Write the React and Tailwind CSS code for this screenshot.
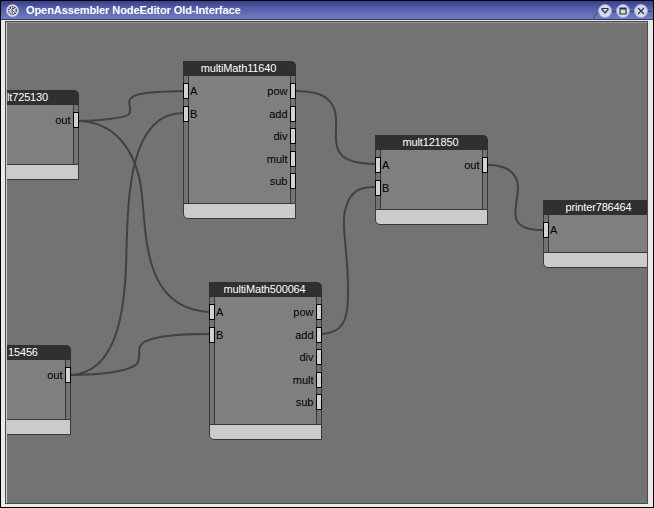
import React from "react";

const FONT = "font-['Liberation_Sans',Arial,sans-serif]";

const nodes = [
  { x: -41, y: 67, w: 113, body: 59, title: "lt725130", titleX: 41, inputs: [], outputs: ["out"] },
  { x: -49, y: 322, w: 113, body: 59, title: "15456", titleX: 50, inputs: [], outputs: ["out"] },
  { x: 176, y: 38, w: 113, body: 127, title: "multiMath11640", inputs: ["A", "B"], outputs: ["pow", "add", "div", "mult", "sub"] },
  { x: 202, y: 259, w: 113, body: 127, title: "multiMath500064", inputs: ["A", "B"], outputs: ["pow", "add", "div", "mult", "sub"] },
  { x: 368, y: 112, w: 113, body: 59, title: "mult121850", inputs: ["A", "B"], outputs: ["out"] },
  { x: 536, y: 177, w: 113, body: 37, title: "printer786464", inputs: ["A"], outputs: [] },
];

const wires = [
  "M72 98 C90 98 119 95 122 91 C126 84 119 80 124 75 C130 69 150 69 176 68",
  "M72 98 C108 99 128 127 134 164 C140 209 134 285 202 289",
  "M64 352 C106 350 117 298 119 243 C121 188 118 90 176 90",
  "M64 352 C90 352 126 349 131 339 C135 329 128 326 137 319 C150 312 175 311 202 311",
  "M289 68 C315 68 328 76 329 95 C330 119 321 141 368 141",
  "M315 311 C334 310 341 299 341 274 C342 229 333 202 339 184 C344 167 354 164 368 164",
  "M481 142 C500 142 511 150 511 165 C510 187 498 207 536 207",
];

function Port({ name, side, gap }) {
  const input = side === "in";
  return (
    <div className={`-ml-px flex h-4 w-[6px] shrink-0 border border-black bg-[#d2d2d2] ${input ? "" : "justify-end"} ${gap}`}>
      <span className={`text-[11px] leading-[14px] text-black ${input ? "ml-[6px]" : "mr-[7.5px]"}`}>{name}</span>
    </div>
  );
}

function Node({ node }) {
  return (
    <div className="absolute" style={{ left: node.x, top: node.y, width: node.w }}>
      <div
        className={`h-[15px] rounded-tr-[5px] bg-[#303030] text-[11px] leading-[15px] tracking-[-0.15px] whitespace-nowrap text-white ${node.titleX ? "" : "pr-[2px] text-center"}`}
        style={{ paddingLeft: node.titleX }}
      >
        {node.title}
      </div>
      <div className="flex justify-between border-x border-[#383838] bg-[#7f7f7f]" style={{ height: node.body }}>
        <div className="flex w-[5px] flex-col border-r border-[#383838] bg-[#747474]">
          {node.inputs.map((name) => (
            <Port key={name} name={name} side="in" gap="mt-[7px]" />
          ))}
        </div>
        <div className="flex w-[5px] flex-col border-l border-[#383838] bg-[#747474]">
          {node.outputs.map((name, i) => (
            <Port key={name} name={name} side="out" gap={i === 2 || i === 4 ? "mt-[6px]" : "mt-[7px]"} />
          ))}
        </div>
      </div>
      <div className="h-4 rounded-bl-[5px] border border-[#383838] bg-[#cbcbcb]" />
    </div>
  );
}

function RoundButton({ children }) {
  return (
    <svg className="relative" width="14" height="14" viewBox="0 0 14 14">
      <circle cx="7" cy="7" r="6.5" fill="#d6daec" stroke="#a9aed8" strokeWidth=".8" />
      <g fill="none" stroke="#30333f" strokeWidth="1.2">{children}</g>
    </svg>
  );
}

export default function App() {
  return (
    <div className={`flex h-[508px] w-[654px] flex-col overflow-hidden border border-black bg-[#ebe8e8] ${FONT}`}>
      <header className="flex h-[19px] shrink-0 items-center border-b border-[#30346a] bg-linear-to-b from-[#37408c] via-[#5a64ae] to-[#747cc0] pr-[5px] pl-[5px]">
        <svg width="13" height="13" viewBox="0 0 13 13">
          <circle cx="6.5" cy="6.5" r="6.3" fill="#d4d6e6" />
          <circle cx="6.5" cy="6.5" r="3.8" fill="none" stroke="#454854" strokeWidth="1.5" strokeDasharray="1.4 1" />
          <path d="M4 4l5 5M8 4L5 8M6.5 4v5" stroke="#454854" strokeWidth="1" strokeDasharray="1.3 .8" />
        </svg>
        <h1 className="ml-[7px] grow text-[11px] leading-[18px] font-bold tracking-[-0.08px] whitespace-nowrap text-white">
          OpenAssembler NodeEditor Old-Interface
        </h1>
        <div className="relative mt-px flex gap-1">
          <svg className="absolute top-[-2px] left-[-6px]" width="60" height="18" fill="none" stroke="#3d4488">
            <path d="M1 18C2 13 5 9.5 11 9.5H60" />
          </svg>
          <RoundButton><path d="M3.5 4.5h7M3.5 5l3.5 4 3.5-4" /></RoundButton>
          <RoundButton><path d="M4 4h6v6H4zM4 4.8h6" /></RoundButton>
          <RoundButton><path d="M4 4l6 6M10 4l-6 6" /></RoundButton>
        </div>
      </header>
      <main className="mt-px mr-[5px] mb-[3px] ml-[4px] grow border border-[#4a4a4e]">
        <div className="h-full w-full border-t border-l border-t-[#969696] border-l-[#c8c8c8] bg-[#737373]">
          <div className="relative h-full w-full overflow-hidden">
            <svg className="absolute inset-0 h-full w-full" fill="none" stroke="#424242" strokeWidth="2">
              {wires.map((d) => <path key={d} d={d} />)}
            </svg>
            {nodes.map((n) => <Node key={n.title} node={n} />)}
          </div>
        </div>
      </main>
    </div>
  );
}
